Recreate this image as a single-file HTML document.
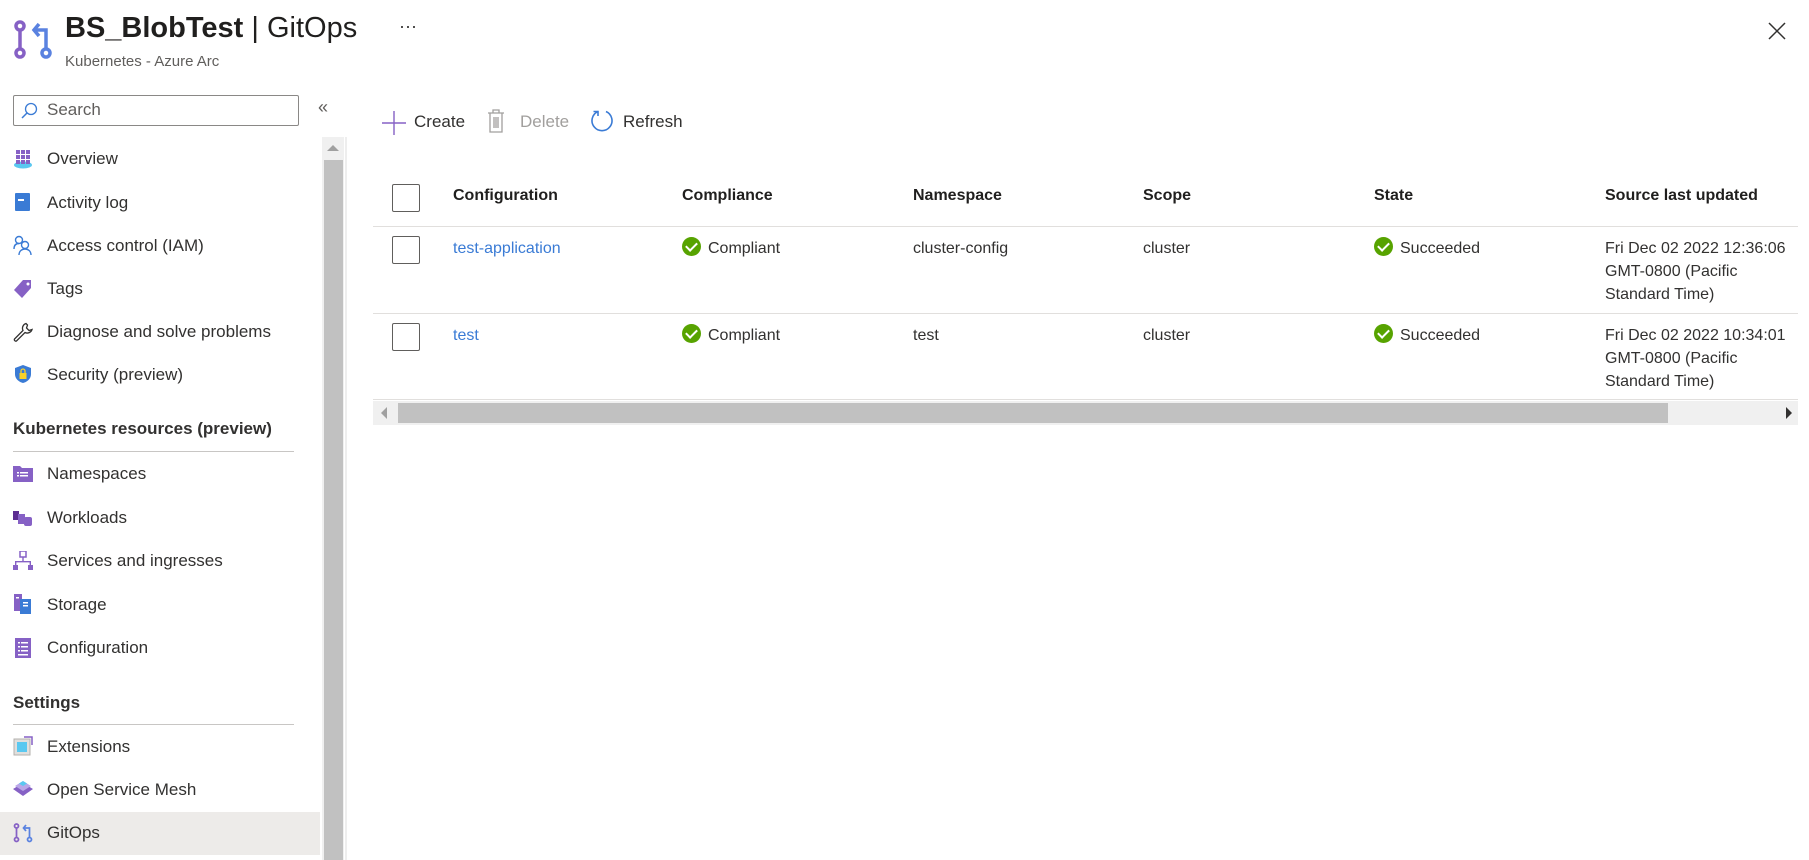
<!DOCTYPE html>
<html><head><meta charset="utf-8"><style>
*{box-sizing:border-box;margin:0;padding:0}
body{width:1809px;height:860px;overflow:hidden;background:#fff;font-family:"Liberation Sans",sans-serif;color:#323130;position:relative}
.a{position:absolute}
.nav{position:absolute;left:47px;font-size:17px;color:#323130;white-space:nowrap}
.ic{position:absolute;left:13px;width:20px;height:20px}
.hd{position:absolute;left:13px;font-size:17px;font-weight:bold;color:#323130}
.th{position:absolute;top:187px;font-size:16px;font-weight:bold;color:#201f1e}
.td{position:absolute;font-size:16px;color:#323130;line-height:23px}
.lnk{color:#3a7bd5}
.cb{position:absolute;left:392px;width:28px;height:28px;border:1px solid #605e5c;border-radius:2px}
.ok{display:inline-block;width:19px;height:19px;border-radius:50%;background:#57a300;vertical-align:-3px;margin-right:7px;position:relative}
.ok:after{content:"";position:absolute;left:6px;top:3px;width:5px;height:9px;border:solid #fff;border-width:0 2.5px 2.5px 0;transform:rotate(45deg)}
</style></head><body>

<svg class="a" style="left:13px;top:20px" width="40" height="40" viewBox="0 0 40 40"><g fill="none" stroke-width="3.5"><circle cx="7" cy="6" r="4" stroke="#8661c5"/><circle cx="7" cy="33" r="4" stroke="#8661c5"/><path d="M7 10V29" stroke="#8661c5"/><circle cx="33" cy="33" r="4" stroke="#5a82e0"/><path d="M33 29V10H22" stroke="#5a82e0"/><path d="M26 4l-5 6 5 6" stroke="#5a82e0"/></g></svg>
<div class="a" style="left:65px;top:12px;font-size:29px;color:#201f1e"><b>BS_BlobTest</b> | GitOps</div>
<div class="a" style="left:65px;top:53px;font-size:15px;color:#605e5c">Kubernetes - Azure Arc</div>
<div class="a" style="left:399px;top:16px;font-size:18px;color:#323130">···</div>
<svg class="a" style="left:1767px;top:21px" width="20" height="20"><path d="M2 2L18 18M18 2L2 18" stroke="#323130" stroke-width="1.5"/></svg>

<div class="a" style="left:13px;top:95px;width:286px;height:31px;border:1px solid #8a8886;border-radius:2px"></div>
<svg class="a" style="left:20px;top:102px" width="18" height="18"><circle cx="11" cy="7" r="5.5" fill="none" stroke="#3a7bd5" stroke-width="1.3"/><path d="M7 11L2 16" stroke="#3a7bd5" stroke-width="1.5"/></svg>
<div class="a" style="left:47px;top:100px;font-size:17px;color:#605e5c">Search</div>
<div class="a" style="left:318px;top:97px;font-size:18px;color:#605e5c">«</div>

<div class="a" style="left:322px;top:137px;width:22px;height:723px;background:#f0f0f0"></div>
<div class="a" style="left:324px;top:160px;width:19px;height:700px;background:#c1c1c1"></div>
<div class="a" style="left:327px;top:145px;width:0;height:0;border-left:6px solid transparent;border-right:6px solid transparent;border-bottom:6px solid #a0a0a0"></div>
<div class="a" style="left:345px;top:137px;width:2px;height:723px;background:#eeeeee"></div>

<svg class="ic" style="top:149px" viewBox="0 0 20 20"><ellipse cx="10" cy="16" rx="9" ry="3.5" fill="#5ac8f0"/><g fill="#8661c5"><rect x="3" y="1" width="4" height="4"/><rect x="8" y="1" width="4" height="4"/><rect x="13" y="1" width="4" height="4"/><rect x="3" y="6" width="4" height="4"/><rect x="8" y="6" width="4" height="4"/><rect x="13" y="6" width="4" height="4"/><rect x="3" y="11" width="4" height="4"/><rect x="8" y="11" width="4" height="4"/><rect x="13" y="11" width="4" height="4"/></g></svg>
<div class="nav" style="top:149px">Overview</div>
<svg class="ic" style="top:192px" viewBox="0 0 20 20"><rect x="2" y="1" width="15" height="18" rx="1" fill="#3a7bd5"/><rect x="5" y="7" width="6" height="2" fill="#fff"/></svg>
<div class="nav" style="top:193px">Activity log</div>
<svg class="ic" style="top:235px" viewBox="0 0 20 20" fill="none" stroke="#3a7bd5" stroke-width="1.4"><circle cx="6" cy="5" r="3.5"/><path d="M1 14c0-4 2-5.5 5-5.5"/><circle cx="12" cy="10" r="3.5"/><path d="M6 20c0-4 3-6 6-6s6 2 6 6"/></svg>
<div class="nav" style="top:236px">Access control (IAM)</div>
<svg class="ic" style="top:279px" viewBox="0 0 20 20"><path d="M10 1h8v8l-9 10-8-8z" fill="#8661c5"/><circle cx="15" cy="5" r="1.5" fill="#fff"/></svg>
<div class="nav" style="top:279px">Tags</div>
<svg class="ic" style="top:322px" viewBox="0 0 20 20" fill="none" stroke="#323130" stroke-width="1.3"><path d="M13 1.5a5 5 0 0 0-3 7L1.5 17a1.5 1.5 0 0 0 2 2l8.5-8.5a5 5 0 0 0 7-3l-3 1-2.5-2.5 1-3z"/></svg>
<div class="nav" style="top:322px">Diagnose and solve problems</div>
<svg class="ic" style="top:364px" viewBox="0 0 20 20"><path d="M10 1l8 3v6c0 5-4 8-8 9-4-1-8-4-8-9V4z" fill="#3a7bd5"/><rect x="6.5" y="9" width="7" height="6" fill="#f8d22a"/><path d="M8 9V7a2 2 0 0 1 4 0v2" fill="none" stroke="#f8d22a" stroke-width="1.3"/></svg>
<div class="nav" style="top:365px">Security (preview)</div>

<div class="hd" style="top:419px">Kubernetes resources (preview)</div>
<div class="a" style="left:13px;top:451px;width:281px;height:1px;background:#c8c6c4"></div>
<svg class="ic" style="top:464px" viewBox="0 0 20 20"><path d="M0 2h7l2 2h11v14H0z" fill="#8661c5"/><g fill="#fff"><rect x="4" y="8" width="2" height="1.5"/><rect x="7" y="8" width="8" height="1.5"/><rect x="4" y="11" width="2" height="1.5"/><rect x="7" y="11" width="8" height="1.5"/></g></svg>
<div class="nav" style="top:464px">Namespaces</div>
<svg class="ic" style="top:508px" viewBox="0 0 20 20"><rect x="0" y="3" width="6" height="9" fill="#5c2d91"/><rect x="5" y="6" width="7" height="10" fill="#8661c5"/><rect x="11" y="9" width="8" height="9" rx="2" fill="#8661c5"/></svg>
<div class="nav" style="top:508px">Workloads</div>
<svg class="ic" style="top:551px" viewBox="0 0 20 20" fill="#8661c5"><rect x="7" y="0" width="6" height="6" fill="none" stroke="#8661c5" stroke-width="1.5"/><path d="M9.3 6h1.4v4H18v4h-1.4v-2.6H3.4V14H2v-4h7.3z"/><rect x="0" y="14" width="5" height="5"/><rect x="15" y="14" width="5" height="5"/></svg>
<div class="nav" style="top:551px">Services and ingresses</div>
<svg class="ic" style="top:594px" viewBox="0 0 20 20"><rect x="1" y="0" width="8" height="17" fill="#8661c5"/><rect x="7" y="5" width="11" height="15" fill="#3a7bd5"/><g fill="#fff"><rect x="10" y="8" width="5" height="1.5"/><rect x="10" y="11" width="5" height="1.5"/><rect x="3" y="3" width="3" height="1.5"/></g></svg>
<div class="nav" style="top:595px">Storage</div>
<svg class="ic" style="top:638px" viewBox="0 0 20 20"><rect x="2" y="0" width="16" height="20" fill="#8661c5"/><g fill="#fff"><rect x="5" y="4" width="2" height="1.5"/><rect x="8" y="4" width="7" height="1.5"/><rect x="5" y="8" width="2" height="1.5"/><rect x="8" y="8" width="7" height="1.5"/><rect x="5" y="12" width="2" height="1.5"/><rect x="8" y="12" width="7" height="1.5"/><rect x="5" y="16" width="10" height="1.5"/></g></svg>
<div class="nav" style="top:638px">Configuration</div>

<div class="hd" style="top:693px">Settings</div>
<div class="a" style="left:13px;top:724px;width:281px;height:1px;background:#c8c6c4"></div>
<svg class="ic" style="top:736px" viewBox="0 0 20 20"><rect x="1" y="3" width="16" height="16" fill="#e1dfdd" stroke="#b3b0ad"/><rect x="4" y="6" width="10" height="10" fill="#5ac8f0"/><path d="M11 1h8v8" fill="none" stroke="#8661c5" stroke-width="1.5"/></svg>
<div class="nav" style="top:737px">Extensions</div>
<svg class="ic" style="top:780px" viewBox="0 0 20 20"><path d="M10 3l10 6-10 7L0 9z" fill="#8661c5"/><path d="M10 1l8 5-8 5-8-5z" fill="#b9a7e8"/><path d="M10 1l4 2.5-4 2.5-4-2.5z" fill="#5ac8f0"/></svg>
<div class="nav" style="top:780px">Open Service Mesh</div>
<div class="a" style="left:0;top:812px;width:320px;height:43px;background:#edebe9"></div>
<svg class="ic" style="top:823px" viewBox="0 0 40 40"><g fill="none" stroke-width="3.5"><circle cx="7" cy="6" r="4" stroke="#8661c5"/><circle cx="7" cy="33" r="4" stroke="#8661c5"/><path d="M7 10V29" stroke="#8661c5"/><circle cx="33" cy="33" r="4" stroke="#5a82e0"/><path d="M33 29V10H22" stroke="#5a82e0"/><path d="M26 4l-5 6 5 6" stroke="#5a82e0"/></g></svg>
<div class="nav" style="top:823px">GitOps</div>

<svg class="a" style="left:382px;top:111px" width="24" height="24"><path d="M12 0V24M0 12H24" stroke="#8661c5" stroke-width="1.4"/></svg>
<div class="a" style="left:414px;top:112px;font-size:17px;color:#323130">Create</div>
<svg class="a" style="left:487px;top:109px" width="18" height="24" viewBox="0 0 18 24" fill="none" stroke="#a19f9d" stroke-width="1.3"><path d="M1 4h16M6 4V1h6v3M3 4v19h12V4M7 8v11M9 8v11M11 8v11"/></svg>
<div class="a" style="left:520px;top:112px;font-size:17px;color:#a19f9d">Delete</div>
<svg class="a" style="left:590px;top:109px" width="24" height="24" viewBox="0 0 24 24" fill="none" stroke="#3a7bd5" stroke-width="1.6"><path d="M8 2.5A10 10 0 1 0 16 2.5"/><path d="M8 7V2.5H3.5"/></svg>
<div class="a" style="left:623px;top:112px;font-size:17px;color:#323130">Refresh</div>

<div class="cb" style="top:184px"></div>
<div class="th" style="left:453px">Configuration</div>
<div class="th" style="left:682px">Compliance</div>
<div class="th" style="left:913px">Namespace</div>
<div class="th" style="left:1143px">Scope</div>
<div class="th" style="left:1374px">State</div>
<div class="th" style="left:1605px">Source last updated</div>
<div class="a" style="left:373px;top:226px;width:1425px;height:1px;background:#e1dfdd"></div>

<div class="cb" style="top:236px"></div>
<div class="td lnk" style="left:453px;top:237px">test-application</div>
<div class="td" style="left:682px;top:237px"><span class="ok"></span>Compliant</div>
<div class="td" style="left:913px;top:237px">cluster-config</div>
<div class="td" style="left:1143px;top:237px">cluster</div>
<div class="td" style="left:1374px;top:237px"><span class="ok"></span>Succeeded</div>
<div class="td" style="left:1605px;top:237px;white-space:nowrap">Fri Dec 02 2022 12:36:06<br>GMT-0800 (Pacific<br>Standard Time)</div>
<div class="a" style="left:373px;top:313px;width:1425px;height:1px;background:#e1dfdd"></div>

<div class="cb" style="top:323px"></div>
<div class="td lnk" style="left:453px;top:324px">test</div>
<div class="td" style="left:682px;top:324px"><span class="ok"></span>Compliant</div>
<div class="td" style="left:913px;top:324px">test</div>
<div class="td" style="left:1143px;top:324px">cluster</div>
<div class="td" style="left:1374px;top:324px"><span class="ok"></span>Succeeded</div>
<div class="td" style="left:1605px;top:324px;white-space:nowrap">Fri Dec 02 2022 10:34:01<br>GMT-0800 (Pacific<br>Standard Time)</div>
<div class="a" style="left:373px;top:399px;width:1425px;height:1px;background:#e1dfdd"></div>

<div class="a" style="left:373px;top:401px;width:1425px;height:24px;background:#f0f0f0"></div>
<div class="a" style="left:398px;top:403px;width:1270px;height:20px;background:#c1c1c1"></div>
<div class="a" style="left:381px;top:407px;width:0;height:0;border-top:6px solid transparent;border-bottom:6px solid transparent;border-right:6px solid #a0a0a0"></div>
<div class="a" style="left:1786px;top:407px;width:0;height:0;border-top:6px solid transparent;border-bottom:6px solid transparent;border-left:6px solid #323130"></div>
</body></html>
